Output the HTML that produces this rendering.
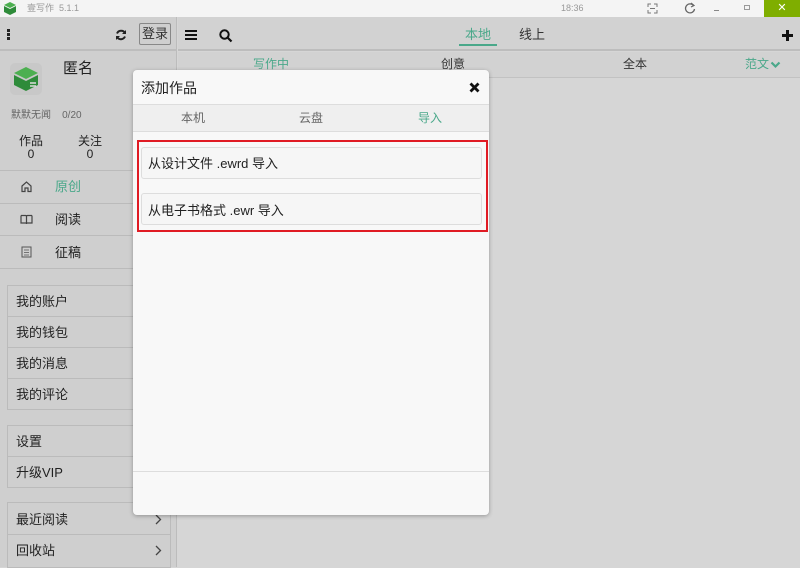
<!DOCTYPE html><html><head><meta charset="utf-8"><style>
*{margin:0;padding:0;box-sizing:border-box}
body{width:800px;height:567px;overflow:hidden;background:#d6d6d6;font-family:"Liberation Sans","Noto Sans CJK SC",sans-serif;font-size:13px;color:#222;position:relative}
.a{position:absolute}
.t{white-space:nowrap;line-height:1}
</style></head><body>
<div class="a" style="left:0;top:0;width:800px;height:17px;background:#f4f4f4"></div>
<div class="a t" style="left:27px;top:4px;font-size:9px;color:#999">壹写作 &nbsp;5.1.1</div>
<svg class="a" style="left:3px;top:1px" width="14" height="15" viewBox="0 0 14 15"><path d="M7 1L13 4L7 7L1 4Z" fill="#4caf50"/><path d="M1 5L7 8L13 5V11L7 14L1 11Z" fill="#2e8b3a"/></svg>
<div class="a t" style="left:561px;top:4px;font-size:9px;color:#999">18:36</div>
<svg class="a" style="left:647px;top:3px" width="11" height="11"><path d="M1 4V1H4M7 1H10V4M10 7V10H7M4 10H1V7M3 5.5H8" fill="none" stroke="#777"/></svg>
<svg class="a" style="left:684px;top:2px" width="12" height="12"><path d="M9.5 3.5A4.5 4.5 0 1 0 10.5 7" fill="none" stroke="#666" stroke-width="1.3"/><path d="M7 1L10 3.5L7 5" fill="none" stroke="#666" stroke-width="1.2"/></svg>
<div class="a" style="left:714px;top:10px;width:5px;border-top:1px solid #888"></div>
<div class="a" style="left:744px;top:5px;width:6px;height:5px;border:1px solid #999"></div>
<div class="a" style="left:764px;top:0;width:36px;height:17px;background:#7fae00;color:#fff;text-align:center;font-size:11px;line-height:17px">✕</div>
<!-- sidebar -->
<div class="a" style="left:0;top:17px;width:177px;height:550px;background:#cfcfcf;border-right:1px solid #bcbcbc"></div>
<div class="a" style="left:0;top:17px;width:177px;height:34px;border-bottom:2px solid #bdbdbd"></div>
<div class="a" style="left:7px;top:29px;width:3px;height:3px;background:#222;box-shadow:0 4px 0 #222,0 8px 0 #222"></div>
<svg class="a" style="left:115px;top:29px" width="12" height="12"><path d="M10 4A4.5 4.5 0 0 0 2 4.5M2 8A4.5 4.5 0 0 0 10 7.5" fill="none" stroke="#222" stroke-width="2"/><path d="M11 1V5H7Z M1 11V7H5Z" fill="#222"/></svg>
<div class="a" style="left:139px;top:23px;width:32px;height:22px;border:1px solid #888;border-radius:2px;text-align:center;line-height:20px;font-size:13px;color:#333">登录</div>
<svg class="a" style="left:10px;top:63px" width="32" height="32" viewBox="0 0 32 32"><rect width="32" height="32" rx="5" fill="#c8c8c8"/><path d="M16 4L28 10L16 16L4 10Z" fill="#4caf50"/><path d="M4 12L16 18L28 12V22L16 28L4 22Z" fill="#2e8b3a"/><path d="M20 20h6M20 23h6" stroke="#ddd" stroke-width="1.5"/></svg>
<div class="a t" style="left:63px;top:61px;font-size:15px">匿名</div>
<div class="a t" style="left:11px;top:111px;font-size:10px;color:#666">默默无闻 &nbsp;&nbsp;&nbsp;0/20</div>
<div class="a t" style="left:19px;top:135px;font-size:12px;text-align:center;line-height:13px">作品<br>0</div>
<div class="a t" style="left:78px;top:135px;font-size:12px;text-align:center;line-height:13px">关注<br>0</div>
<div class="a" style="left:0;top:170px;width:177px;height:99px;border-top:1px solid #bbb"></div>
<div class="a" style="left:0;top:203px;width:177px;border-top:1px solid #bbb"></div>
<div class="a" style="left:0;top:235px;width:177px;border-top:1px solid #bbb"></div>
<div class="a" style="left:0;top:268px;width:177px;border-top:1px solid #bbb"></div>
<svg class="a" style="left:20px;top:180px" width="13" height="13"><path d="M2 6L6.5 2L11 6V11.5H8V8H5V11.5H2Z" fill="none" stroke="#444" stroke-width="1.2"/></svg>
<div class="a t" style="left:55px;top:180px;color:#4aa88a">原创</div>
<svg class="a" style="left:20px;top:213px" width="13" height="13"><path d="M1 2.5H5.5Q6.5 2.5 6.5 3.5V11M12 2.5H7.5Q6.5 2.5 6.5 3.5M1 2.5V10H12V2.5" fill="none" stroke="#444" stroke-width="1.2"/></svg>
<div class="a t" style="left:55px;top:213px">阅读</div>
<svg class="a" style="left:21px;top:246px" width="11" height="12"><rect x="1" y="1" width="9" height="10" fill="none" stroke="#555"/><path d="M3 4H8M3 6.5H8M3 9H8" stroke="#555" stroke-width=".8"/></svg>
<div class="a t" style="left:55px;top:246px">征稿</div>
<div class="a" style="left:7px;top:285px;width:164px;height:125px;border:1px solid #bbb"></div>
<div class="a" style="left:7px;top:316px;width:164px;border-top:1px solid #bbb"></div>
<div class="a" style="left:7px;top:347px;width:164px;border-top:1px solid #bbb"></div>
<div class="a" style="left:7px;top:378px;width:164px;border-top:1px solid #bbb"></div>
<div class="a t" style="left:16px;top:295px">我的账户</div>
<div class="a t" style="left:16px;top:326px">我的钱包</div>
<div class="a t" style="left:16px;top:357px">我的消息</div>
<div class="a t" style="left:16px;top:388px">我的评论</div>
<div class="a" style="left:7px;top:425px;width:164px;height:63px;border:1px solid #bbb"></div>
<div class="a" style="left:7px;top:456px;width:164px;border-top:1px solid #bbb"></div>
<div class="a t" style="left:16px;top:435px">设置</div>
<div class="a t" style="left:16px;top:466px">升级VIP</div>
<div class="a" style="left:7px;top:502px;width:164px;height:66px;border:1px solid #bbb"></div>
<div class="a" style="left:7px;top:534px;width:164px;border-top:1px solid #bbb"></div>
<div class="a t" style="left:16px;top:513px">最近阅读</div>
<div class="a t" style="left:16px;top:544px">回收站</div>
<svg class="a" style="left:155px;top:514px" width="7" height="11"><path d="M1 1L5.5 5.5L1 10" fill="none" stroke="#444" stroke-width="1.3"/></svg>
<svg class="a" style="left:155px;top:545px" width="7" height="11"><path d="M1 1L5.5 5.5L1 10" fill="none" stroke="#444" stroke-width="1.3"/></svg>
<!-- main header -->
<div class="a" style="left:178px;top:17px;width:622px;height:34px;border-bottom:2px solid #bdbdbd;background:#d2d2d2"></div>
<div class="a" style="left:185px;top:30px;width:12px;height:2px;background:#111;box-shadow:0 4px 0 #111,0 8px 0 #111"></div>
<svg class="a" style="left:219px;top:29px" width="14" height="14"><circle cx="5.5" cy="5.5" r="4.2" fill="none" stroke="#111" stroke-width="2"/><path d="M8.5 8.5L12.5 12.5" stroke="#111" stroke-width="2.2"/></svg>
<div class="a t" style="left:465px;top:28px;font-size:13px;color:#4aa88a">本地</div>
<div class="a" style="left:459px;top:44px;width:38px;height:2px;background:#4aa88a"></div>
<div class="a t" style="left:519px;top:28px;font-size:13px;color:#333">线上</div>
<div class="a" style="left:782px;top:34px;width:11px;height:3px;background:#111"></div>
<div class="a" style="left:786px;top:30px;width:3px;height:11px;background:#111"></div>
<div class="a" style="left:178px;top:52px;width:622px;height:26px;border-bottom:1px solid #c2c2c2;background:#d2d2d2"></div>
<div class="a t" style="left:253px;top:58px;font-size:12px;color:#4aa88a">写作中</div>
<div class="a t" style="left:441px;top:58px;font-size:12px;color:#333">创意</div>
<div class="a t" style="left:623px;top:58px;font-size:12px;color:#333">全本</div>
<div class="a t" style="left:745px;top:58px;font-size:12px;color:#4aa88a">范文</div>
<svg class="a" style="left:770px;top:61px" width="11" height="8"><path d="M1.5 1.5L5.5 5.5L9.5 1.5" fill="none" stroke="#4aa88a" stroke-width="2.2"/></svg>
<!-- modal -->
<div class="a" style="left:133px;top:70px;width:356px;height:445px;background:#f8f8f8;border-radius:4px;box-shadow:0 1px 4px rgba(0,0,0,.3)"></div>
<div class="a t" style="left:141px;top:81px;font-size:14px;color:#222">添加作品</div>
<svg class="a" style="left:469px;top:82px" width="11" height="11"><path d="M1.5 1.5L9.5 9.5M9.5 1.5L1.5 9.5" stroke="#111" stroke-width="2.8"/></svg>
<div class="a" style="left:133px;top:104px;width:356px;height:28px;background:#efefef;border-top:1px solid #ddd;border-bottom:1px solid #ddd"></div>
<div class="a t" style="left:181px;top:112px;font-size:12px;color:#666">本机</div>
<div class="a t" style="left:299px;top:112px;font-size:12px;color:#666">云盘</div>
<div class="a t" style="left:418px;top:112px;font-size:12px;color:#4aa88a">导入</div>
<div class="a" style="left:137px;top:140px;width:351px;height:92px;border:2px solid #e01b24"></div>
<div class="a" style="left:141px;top:147px;width:341px;height:32px;border:1px solid #ddd;border-radius:3px;background:#f6f6f6"></div>
<div class="a t" style="left:148px;top:157px;font-size:13px">从设计文件 .ewrd 导入</div>
<div class="a" style="left:141px;top:193px;width:341px;height:32px;border:1px solid #ddd;border-radius:3px;background:#f6f6f6"></div>
<div class="a t" style="left:148px;top:204px;font-size:13px">从电子书格式 .ewr 导入</div>
<div class="a" style="left:133px;top:471px;width:356px;border-top:1px solid #ddd"></div>
</body></html>
